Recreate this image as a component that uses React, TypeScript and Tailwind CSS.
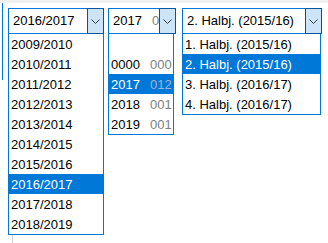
import React from 'react';

const years = [
  '2009/2010',
  '2010/2011',
  '2011/2012',
  '2012/2013',
  '2013/2014',
  '2014/2015',
  '2015/2016',
  '2016/2017',
  '2017/2018',
  '2018/2019',
];

const codes = [
  { year: '', code: '' },
  { year: '0000', code: '000' },
  { year: '2017', code: '012' },
  { year: '2018', code: '001' },
  { year: '2019', code: '001' },
];

const halves = [
  '1. Halbj. (2015/16)',
  '2. Halbj. (2015/16)',
  '3. Halbj. (2016/17)',
  '4. Halbj. (2016/17)',
];

function Chevron() {
  return (
    <svg width="9" height="5" viewBox="0 0 9 5" className="mt-px">
      <polyline points="0.5,0.5 4.5,4.5 8.5,0.5" fill="none" stroke="#3c3c3c" strokeWidth="1" />
    </svg>
  );
}

function SelectBox({ width, children }: { width: string; children: React.ReactNode }) {
  return (
    <div className={`flex h-[26px] border border-[#0078d7] bg-white ${width}`}>
      <div className="flex flex-1 items-center overflow-hidden whitespace-nowrap pl-1">{children}</div>
      <div className="-my-px -mr-px flex w-[17px] shrink-0 items-center justify-center border border-[#005499] bg-[#cce4f7]">
        <Chevron />
      </div>
    </div>
  );
}

function Row({ selected, children }: { selected?: boolean; children: React.ReactNode }) {
  return (
    <div
      className={`flex h-5 items-center whitespace-nowrap px-[2px] pt-px ${
        selected ? 'bg-[#0078d7] text-white' : 'text-black'
      }`}
    >
      {children}
    </div>
  );
}

export default function App() {
  return (
    <div className="h-[243px] w-[328px] overflow-hidden bg-white text-[13px] text-black [font-family:'Liberation_Sans',Arial,sans-serif]">
      <div className="h-[3px] bg-[#f0f0f0]" />
      <div className="flex">
        <div className="ml-[2px] mr-[5px] h-[77px] w-px bg-[#0078d7]" />

        <div className="mt-[5px] flex flex-col">
          <SelectBox width="w-[96px]">2016/2017</SelectBox>
          <div className="w-[96px] border border-t-0 border-[#0078d7] bg-white">
            {years.map((y, i) => (
              <Row key={y} selected={i === 7}>
                {y}
              </Row>
            ))}
          </div>
          <div className="ml-1 h-[12px] w-px bg-[#d0d0d0]" />
        </div>

        <div className="ml-1 mt-[5px] flex flex-col">
          <SelectBox width="w-[68px]">
            <span className="w-[39px] shrink-0">2017</span>
            <span className="text-[#808080]">012</span>
          </SelectBox>
          <div className="w-[66px] border border-t-0 border-[#0078d7] bg-white">
            {codes.map((c, i) => (
              <Row key={i} selected={i === 2}>
                <span className="w-[39px] shrink-0">{c.year}</span>
                <span className={i === 2 ? 'text-[#a8aed0]' : 'text-[#808080]'}>{c.code}</span>
              </Row>
            ))}
          </div>
        </div>

        <div className="ml-[6px] mt-[5px] flex flex-col">
          <SelectBox width="w-[140px]">2. Halbj. (2015/16)</SelectBox>
          <div className="w-[139px] border border-t-0 border-[#0078d7] bg-white">
            {halves.map((h, i) => (
              <Row key={h} selected={i === 1}>
                {h}
              </Row>
            ))}
          </div>
        </div>
      </div>
    </div>
  );
}
